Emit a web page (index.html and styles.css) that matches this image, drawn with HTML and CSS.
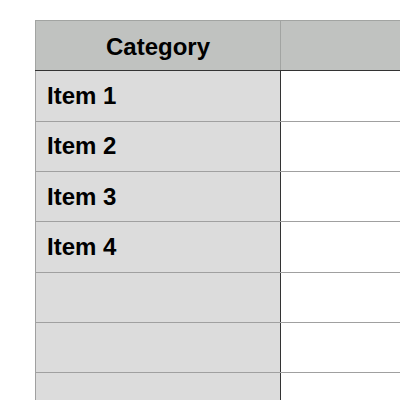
FILE: index.html
```html
<!DOCTYPE html>
<html>
<head>
<meta charset="utf-8">
<link rel="stylesheet" href="styles.css">
</head>
<body>
<div class="page">
  <table class="grid">
    <thead>
      <tr>
        <th class="cat">Category</th>
        <th class="val"></th>
      </tr>
    </thead>
    <tbody>
      <tr><td class="cat">Item 1</td><td class="val"></td></tr>
      <tr><td class="cat">Item 2</td><td class="val"></td></tr>
      <tr><td class="cat">Item 3</td><td class="val"></td></tr>
      <tr><td class="cat">Item 4</td><td class="val"></td></tr>
      <tr><td class="cat"></td><td class="val"></td></tr>
      <tr><td class="cat"></td><td class="val"></td></tr>
      <tr><td class="cat"></td><td class="val"></td></tr>
    </tbody>
  </table>
</div>
</body>
</html>
```
FILE: styles.css
```css
html, body {
  margin: 0;
  padding: 0;
  background: #ffffff;
  overflow: hidden;
  width: 400px;
  height: 400px;
}
.page {
  padding: 20px 0 0 35px;
  height: 380px;
  overflow: hidden;
}
.grid {
  border-collapse: collapse;
  table-layout: fixed;
  width: 365px;
  font-family: "Liberation Sans", Arial, sans-serif;
  font-weight: bold;
  font-size: 24px;
  color: #000;
}
.grid th, .grid td {
  height: 50.33px;
  padding: 0;
  box-sizing: border-box;
}
.grid thead th {
  background: #c0c2c0;
  border-top: 1px solid #a2a4a2;
  border-bottom: 1px solid #333333;
  font-weight: bold;
  padding-top: 2px;
}
.grid thead th.cat {
  width: 245px;
  border-left: 1px solid #a2a4a2;
  border-right: 1px solid #a2a4a2;
  text-align: center;
}
.grid tbody td {
  border-bottom: 1px solid #a0a0a0;
}
.grid tbody td.cat {
  background: #dcdcdc;
  border-left: 1px solid #a0a0a0;
  border-right: 1px solid #333333;
  padding-left: 11px;
  text-align: left;
}
.grid tbody td.val {
  background: #ffffff;
}
```
